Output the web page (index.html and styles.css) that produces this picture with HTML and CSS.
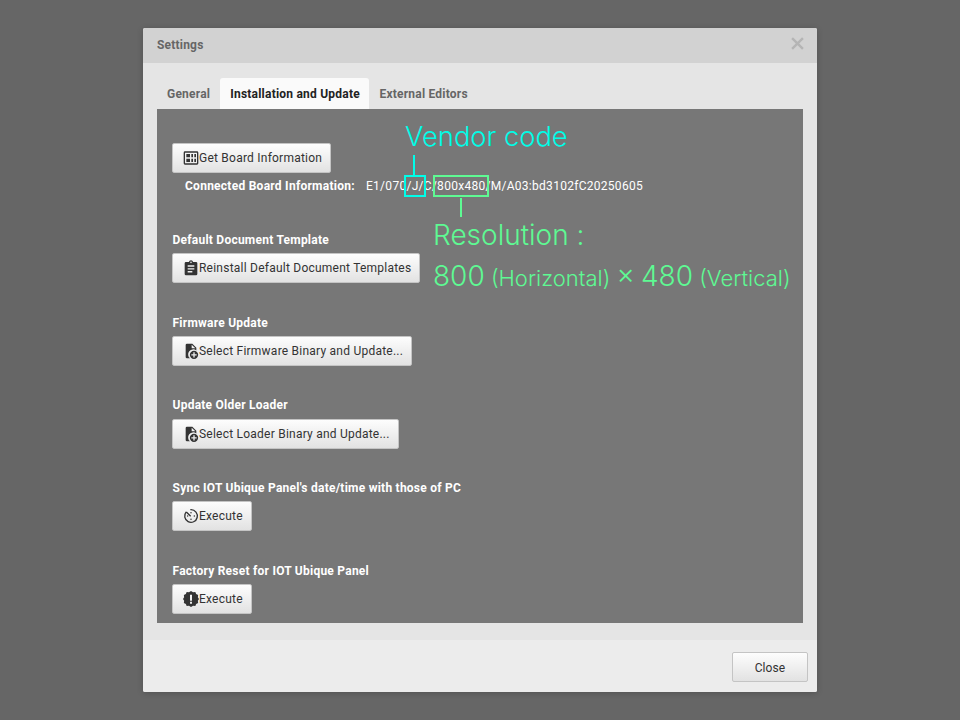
FILE: index.html
```html
<!DOCTYPE html>
<html lang="en">
<head>
<meta charset="utf-8">
<title>Settings</title>
<link rel="stylesheet" href="styles.css">
</head>
<body>
<svg class="sprite" width="0" height="0" aria-hidden="true">
  <symbol id="i-file-plus" viewBox="0 0 24 24"><path d="M14 1H6a2 2 0 0 0-2 2v18a2 2 0 0 0 2 2h4.500a7.500 7.500 0 0 1 9.500-11.800V7zm-1 7V2.500L18.500 8z"/><path fill-rule="evenodd" d="M16.500 11.500a6.250 6.250 0 1 0 0 12.500 6.250 6.250 0 0 0 0-12.500zm4 7.200h-3v3h-2v-3h-3v-2h3v-3h2v3h3z"/></symbol>
</svg>
<main class="modal">
  <header class="modal-head">
    <h1 class="modal-title">Settings</h1>
    <svg class="modal-x" viewBox="0 0 12 12"><path d="M1 1l10 10m0-10L1 11"/></svg>
  </header>
  <div class="modal-body">
    <nav class="tabs">
      <span class="tab">General</span>
      <span class="tab tab-active">Installation and Update</span>
      <span class="tab">External Editors</span>
    </nav>
    <section class="panel">
      <div class="group group-first">
        <button class="btn">
          <svg class="ico" viewBox="0 0 24 24"><path fill-rule="evenodd" d="M3 2h18a2 2 0 0 1 2 2v16a2 2 0 0 1-2 2H3a2 2 0 0 1-2-2V4a2 2 0 0 1 2-2zm0 2v16h18V4zm2 2h5.500v5H5zm0 7h5.500v5H5zm7.500-7H15v5h-2.500zm0 7H15v5h-2.500zM17 6h2.500v5H17zm0 7h2.500v5H17z"/></svg>Get Board Information</button>
        <p class="info"><b class="info-label">Connected Board Information:</b><span class="info-value">E1/070/J/C/800x480/M/A03:bd3102fC20250605</span></p>
      </div>
      <div class="group group-doc">
        <h2 class="label">Default Document Template</h2>
        <button class="btn">
          <svg class="ico" viewBox="0 0 24 24"><path fill-rule="evenodd" d="M19.500 3h-4.300a3.300 3.300 0 0 0-6.400 0H4.500a2 2 0 0 0-2 2v16a2 2 0 0 0 2 2h15a2 2 0 0 0 2-2V5a2 2 0 0 0-2-2zM12 2.300a1.200 1.200 0 1 1 0 2.400 1.200 1.200 0 0 1 0-2.400zM7 8h10v2.200H7zm0 4.200h10v2.200H7zm0 4.200h7v2.200H7z"/></svg>Reinstall Default Document Templates</button>
      </div>
      <div class="group">
        <h2 class="label">Firmware Update</h2>
        <button class="btn"><svg class="ico"><use href="#i-file-plus"/></svg>Select Firmware Binary and Update...</button>
      </div>
      <div class="group">
        <h2 class="label">Update Older Loader</h2>
        <button class="btn"><svg class="ico"><use href="#i-file-plus"/></svg>Select Loader Binary and Update...</button>
      </div>
      <div class="group">
        <h2 class="label">Sync IOT Ubique Panel's date/time with those of PC</h2>
        <button class="btn">
          <svg class="ico" viewBox="0 0 24 24"><path d="M11 2.500h1a9.500 9.500 0 1 1-7.200 3.300M5 6l6.500 6.500" fill="none" stroke="#333" stroke-width="2"/><circle cx="7" cy="12" r="1.100"/><circle cx="12" cy="17" r="1.100"/><circle cx="17" cy="12" r="1.100"/><circle cx="12" cy="7" r="1.100"/></svg>Execute</button>
      </div>
      <div class="group">
        <h2 class="label">Factory Reset for IOT Ubique Panel</h2>
        <button class="btn">
          <svg class="ico" viewBox="0 0 24 24"><path fill-rule="evenodd" d="M12 0l3 2 3.500-.5 1.200 3 3 1.500-.4 3.300L24 12l-1.700 2.700.4 3.300-3 1.500-1.200 3L15 22l-3 2-3-2-3.500.5-1.200-3-3-1.500.4-3.300L0 12l1.700-2.700L1.300 6l3-1.500 1.200-3L9 2zM10.500 5.500v9h3v-9zm0 10.500v3h3v-3z"/></svg>Execute</button>
      </div>
    </section>
  </div>
  <footer class="modal-foot"><button class="btn btn-close">Close</button></footer>

  <div class="note">
    <span class="note-text note-vendor">Vendor code</span>
    <i class="note-line note-line-vendor"></i>
    <i class="note-box note-box-vendor"></i>
    <i class="note-box note-box-res"></i>
    <i class="note-line note-line-res"></i>
    <span class="note-text note-res">Resolution :</span>
    <span class="note-text note-dim">800 <small>(Horizontal)</small> × 480 <small>(Vertical)</small></span>
  </div>
</main>
</body>
</html>
```

FILE: styles.css
```css
* { box-sizing: border-box; }
html, body { margin: 0; height: 100%; }
body {
  background: #666;
  font-family: Roboto, "Liberation Sans", sans-serif;
  font-size: 12px;
  padding-top: 28px;
}
.sprite { position: absolute; }
.modal {
  position: relative;
  width: 674px;
  height: 664px;
  margin: 0 auto;
  display: flex;
  flex-direction: column;
  background: #e5e5e5;
  border-radius: 2px;
  overflow: hidden;
  box-shadow: 0 1px 6px rgba(0,0,0,.2);
}
.modal-head {
  height: 35px;
  flex: none;
  background: #d2d2d2;
  display: flex;
  align-items: center;
  justify-content: space-between;
  padding: 0 13px 2px 14px;
}
.modal-title { margin: 0; font-size: 12px; font-weight: 700; color: #666; letter-spacing: .2px; }
.modal-x { width: 13px; height: 13px; margin-top: -2px; }
.modal-x path { fill: none; stroke: #b5b5b5; stroke-width: 2.200; }
.modal-body { flex: 1; padding: 15px 14px 17px; display: flex; flex-direction: column; }
.tabs { display: flex; height: 31px; flex: none; }
.tab {
  padding: 9px 9.500px 0 10px;
  font-weight: 700;
  color: #666;
  letter-spacing: .22px;
  border-radius: 3px 3px 0 0;
}
.tab:first-child { padding-right: 10px; }
.tab-active { background: #fafafa; color: #222; }
.panel { flex: 1; background: #777; padding: 34px 15px 0; overflow: hidden; }
.group { margin-top: 32.170px; }
.group-first { margin-top: 0; }
.group-doc { margin-top: 38.600px; padding-bottom: .4px; }
.label {
  margin: 0 0 5.500px 0.500px;
  font-size: 12px;
  line-height: 15px;
  font-weight: 700;
  color: #fff;
  letter-spacing: .24px;
}
.btn {
  display: flex;
  align-items: center;
  height: 30px;
  padding: 0 8px 0 10px;
  font: 12px Roboto, "Liberation Sans", sans-serif;
  letter-spacing: .23px;
  color: #333;
  background: linear-gradient(#fdfdfd, #e2e2e2);
  border: 1px solid #c4c4c4;
  border-radius: 2px;
}
.ico { width: 16px; height: 16px; fill: #333; flex: none; }
.info { margin: 6px 0 0 13px; color: #fff; line-height: 15px; display: flex; }
.info-label { font-weight: 700; width: 181px; letter-spacing: .26px; }
.info-value { letter-spacing: .28px; }
.modal-foot {
  height: 52px;
  flex: none;
  background: #ececec;
  display: flex;
  justify-content: flex-end;
  align-items: center;
  padding: 2px 9px 0 0;
}
.btn-close { width: 76px; justify-content: center; padding: 1px 0 0; letter-spacing: .1px; }
.note { position: absolute; inset: 0; pointer-events: none; }
.note-text { position: absolute; font-family: Inter, Roboto, sans-serif; font-weight: 300; white-space: nowrap; }
.note-vendor { left: 262px; top: 93px; font-size: 27.300px; line-height: 32px; color: #00fde8; }
.note-res { left: 290px; top: 191px; font-size: 28px; line-height: 32px; color: #5efa93; }
.note-dim { left: 290px; top: 231px; font-size: 28px; line-height: 34px; color: #5efa93; word-spacing: -1.700px; }
.note-dim small { font-size: 22px; }
.note-line { position: absolute; width: 2px; }
.note-line-vendor { left: 270px; top: 127px; height: 20px; background: #00fde8; }
.note-line-res { left: 317px; top: 170px; height: 19px; background: #5efa93; }
.note-box { position: absolute; border: 2px solid; }
.note-box-vendor { left: 261px; top: 147px; width: 22px; height: 22px; border-color: #00fde8; }
.note-box-res { left: 290px; top: 147px; width: 56px; height: 22px; border-color: #5efa93; }
```
